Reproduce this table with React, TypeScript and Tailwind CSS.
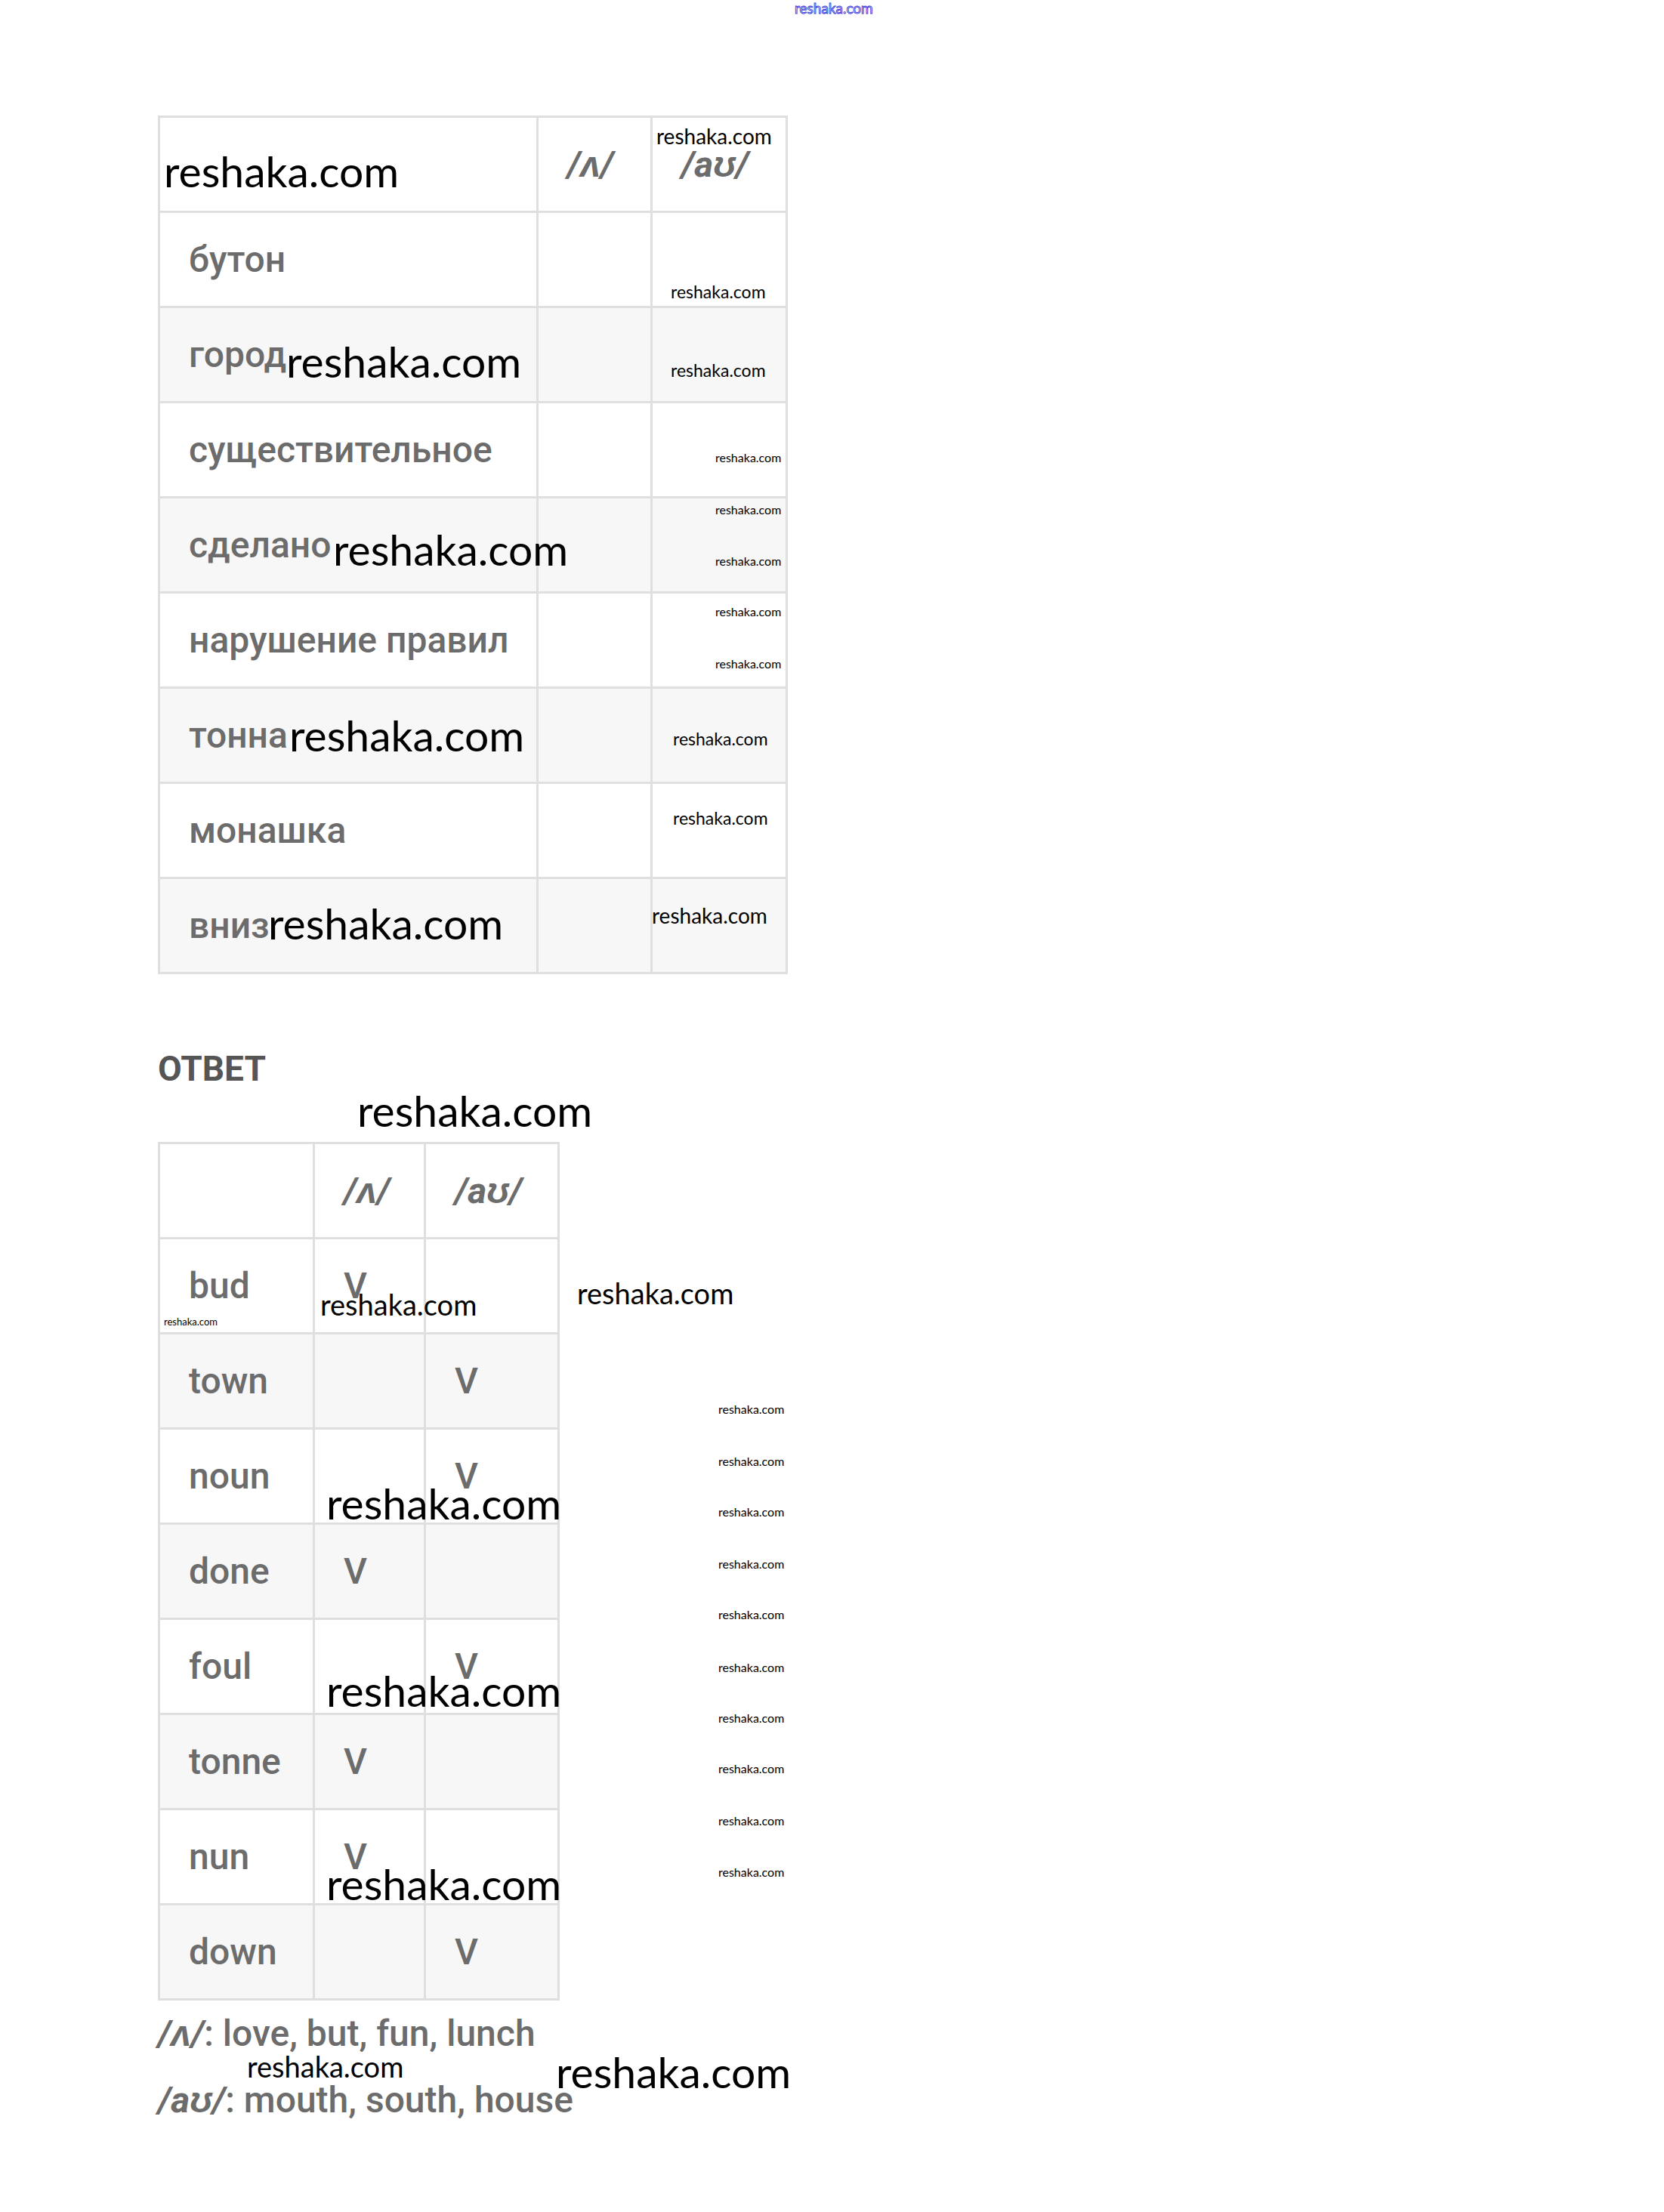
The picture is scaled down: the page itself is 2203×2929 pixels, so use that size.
const gray = "font-['Roboto',sans-serif] text-[48px] font-medium text-[#6c6c6c]";

type Row = { word: string; a?: boolean; b?: boolean };

const task: Row[] = [
  { word: "бутон" },
  { word: "город" },
  { word: "существительное" },
  { word: "сделано" },
  { word: "нарушение правил" },
  { word: "тонна" },
  { word: "монашка" },
  { word: "вниз" },
];

const answer: Row[] = [
  { word: "bud", a: true },
  { word: "town", b: true },
  { word: "noun", b: true },
  { word: "done", a: true },
  { word: "foul", b: true },
  { word: "tonne", a: true },
  { word: "nun", a: true },
  { word: "down", b: true },
];

// watermarks sit on top of the page
const marks = [
  "left-[217px] top-[198px] text-[57px]",
  "left-[869px] top-[166px] text-[28px]",
  "left-[888px] top-[375px] text-[23px]",
  "left-[888px] top-[479px] text-[23px]",
  "left-[379px] top-[450px] text-[57px]",
  "left-[947px] top-[598px] text-[16px]",
  "left-[947px] top-[667px] text-[16px]",
  "left-[947px] top-[735px] text-[16px]",
  "left-[441px] top-[699px] text-[57px]",
  "left-[947px] top-[802px] text-[16px]",
  "left-[947px] top-[871px] text-[16px]",
  "left-[383px] top-[945px] text-[57px]",
  "left-[891px] top-[967px] text-[23px]",
  "left-[891px] top-[1072px] text-[23px]",
  "left-[355px] top-[1194px] text-[57px]",
  "left-[863px] top-[1198px] text-[28px]",
  "left-[473px] top-[1442px] text-[57px]",
  "left-[217px] top-[1744px] text-[13px]",
  "left-[424px] top-[1708px] text-[38px]",
  "left-[764px] top-[1693px] text-[38px]",
  "left-[432px] top-[1962px] text-[57px]",
  "left-[432px] top-[2210px] text-[57px]",
  "left-[432px] top-[2466px] text-[57px]",
  "left-[951px] top-[1858px] text-[16px]",
  "left-[951px] top-[1927px] text-[16px]",
  "left-[951px] top-[1994px] text-[16px]",
  "left-[951px] top-[2063px] text-[16px]",
  "left-[951px] top-[2130px] text-[16px]",
  "left-[951px] top-[2200px] text-[16px]",
  "left-[951px] top-[2267px] text-[16px]",
  "left-[951px] top-[2334px] text-[16px]",
  "left-[951px] top-[2403px] text-[16px]",
  "left-[951px] top-[2471px] text-[16px]",
  "left-[327px] top-[2717px] text-[38px]",
  "left-[736px] top-[2715px] text-[57px]",
];

function Cell({ shade, children }: { shade?: boolean; children?: React.ReactNode }) {
  return (
    <div className={`flex h-[123px] items-center whitespace-nowrap px-[38px] ${shade ? "bg-[#f7f7f7]" : "bg-white"} ${gray}`}>
      {children}
    </div>
  );
}

function Head() {
  return (
    <>
      <Cell />
      <Cell><span className="font-bold italic">/ʌ/</span></Cell>
      <Cell><span className="font-bold italic">/aʊ/</span></Cell>
    </>
  );
}

export default function App() {
  return (
    <div className="relative min-h-[2929px] w-full bg-white">
      <div className="flex flex-col items-start pl-[209px] pt-[153px]">
        {/* task table */}
        <div className="grid grid-cols-[498px_148px_176px] gap-[3px] bg-[#dfdfdf] p-[3px]">
          <Head />
          {task.map((r, n) => (
            <div key={r.word} className="contents">
              <Cell shade={n % 2 === 1}>{r.word}</Cell>
              <Cell shade={n % 2 === 1} />
              <Cell shade={n % 2 === 1} />
            </div>
          ))}
        </div>

        <h2 className="mt-[102px] font-['Roboto',sans-serif] text-[46px] font-bold leading-none text-[#555]">ОТВЕТ</h2>

        {/* answer table */}
        <div className="mt-[74px] grid grid-cols-[202px_144px_174px] gap-[3px] bg-[#dfdfdf] p-[3px]">
          <Head />
          {answer.map((r, n) => (
            <div key={r.word} className="contents">
              <Cell shade={n % 2 === 1}>{r.word}</Cell>
              <Cell shade={n % 2 === 1}>{r.a ? "V" : ""}</Cell>
              <Cell shade={n % 2 === 1}>{r.b ? "V" : ""}</Cell>
            </div>
          ))}
        </div>

        <div className={`${gray} whitespace-nowrap leading-[88px]`}>
          <p><span className="font-bold italic">/ʌ/</span>: love, but, fun, lunch</p>
          <p><span className="font-bold italic">/aʊ/</span>: mouth, south, house</p>
        </div>
      </div>

      {marks.map((m, i) => (
        <span key={i} className={`absolute ${m} whitespace-nowrap font-['Lato',sans-serif] leading-none text-black`}>
          reshaka.com
        </span>
      ))}
      <span className="absolute left-[1052px] top-[1px] whitespace-nowrap font-['Lato',sans-serif] text-[19px] leading-none text-transparent [-webkit-text-stroke:1px_#4444dd]">
        reshaka.com
      </span>
    </div>
  );
}
